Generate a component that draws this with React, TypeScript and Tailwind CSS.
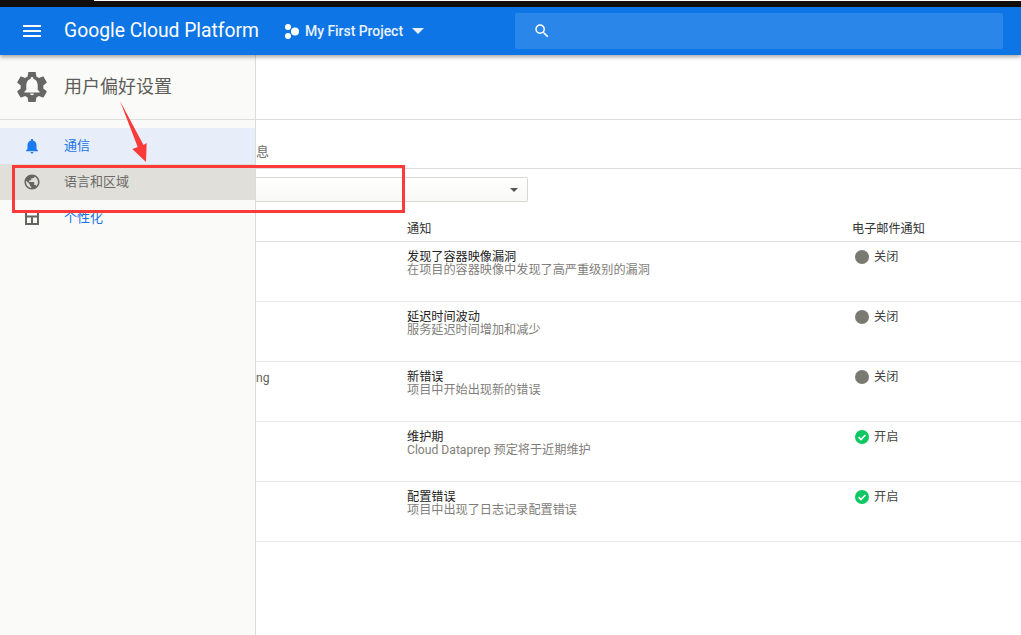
import React from 'react';

const rows = [
  { source: '', title: '发现了容器映像漏洞', desc: '在项目的容器映像中发现了高严重级别的漏洞', on: false },
  { source: '', title: '延迟时间波动', desc: '服务延迟时间增加和减少', on: false },
  { source: 'ng', title: '新错误', desc: '项目中开始出现新的错误', on: false },
  { source: '', title: '维护期', desc: 'Cloud Dataprep 预定将于近期维护', on: true },
  { source: '', title: '配置错误', desc: '项目中出现了日志记录配置错误', on: true },
];

const fontStack = "font-['Roboto','Noto_Sans_CJK_SC',sans-serif]";

const StatusIcon = ({ on }: { on: boolean }) =>
  on ? (
    <svg className="-mt-[1px]" width="14" height="14" viewBox="0 0 14 14">
      <circle cx="7" cy="7" r="7" fill="#0cc762" />
      <path d="M3.6 7.2l2.4 2.4 4.4-4.6" fill="none" stroke="#fff" strokeWidth="1.7" />
    </svg>
  ) : (
    <svg className="-mt-[1px]" width="14" height="14" viewBox="0 0 14 14">
      <circle cx="7" cy="7" r="7" fill="#7b7a72" />
    </svg>
  );

const Header = () => (
  <header className="relative z-20 flex h-[48px] shrink-0 items-center bg-[#0e75e6] shadow-[0_2px_4px_rgba(0,0,0,0.35)]">
    <svg className="ml-[20px]" width="24" height="24" viewBox="0 0 24 24" fill="#fff">
      <path d="M3 18h18v-2H3v2zm0-5h18v-2H3v2zm0-7v2h18V6H3z" />
    </svg>
    <span className="ml-[20px] w-[221px] text-[19.3px] font-normal text-white font-['Roboto',sans-serif]">
      Google Cloud Platform
    </span>
    <svg width="15" height="15" viewBox="0 0 15 15" fill="#fff">
      <circle cx="3" cy="3" r="3" />
      <circle cx="3" cy="12" r="3" />
      <circle cx="10" cy="7.5" r="4" />
    </svg>
    <span className="ml-[5px] text-[14px] font-medium tracking-[-0.05px] text-[#e8f1fd] font-['Roboto',sans-serif]">
      My First Project
    </span>
    <svg className="ml-[9px]" width="12" height="6" viewBox="0 0 12 6" fill="#e8f1fd">
      <path d="M0 0h12L6 6z" />
    </svg>
    <div className="ml-[91px] flex h-[36px] w-[488px] items-center rounded-[2px] bg-[#2a86e9] pl-[18px]">
      <svg width="18" height="18" viewBox="0 0 24 24" fill="#fff">
        <path d="M15.5 14h-.79l-.28-.27A6.47 6.47 0 0 0 16 9.5 6.5 6.5 0 1 0 9.5 16c1.61 0 3.09-.59 4.23-1.57l.27.28v.79l5 4.99L20.49 19l-4.99-5zm-6 0C7.01 14 5 11.99 5 9.5S7.01 5 9.5 5 14 7.01 14 9.5 11.99 14 9.5 14z" />
      </svg>
    </div>
  </header>
);

const Sidebar = () => (
  <aside className="relative z-10 w-[256px] shrink-0 border-r border-[#dcdcd8] bg-[#fafaf8]">
    <div className="flex h-[65px] items-center border-b border-[#dfdfdb] pb-[1px] pl-[17px]">
      <svg width="30" height="30" viewBox="2.5 2.5 19 19">
        <path
          fill="#666662"
          d="M19.14 12.94c.04-.3.06-.61.06-.94 0-.32-.02-.64-.07-.94l2.03-1.58c.18-.14.23-.41.12-.61l-1.92-3.32c-.12-.22-.37-.29-.59-.22l-2.39.96c-.5-.38-1.03-.7-1.62-.94l-.36-2.54c-.04-.24-.24-.41-.48-.41h-3.84c-.24 0-.43.17-.47.41l-.36 2.54c-.59.24-1.13.57-1.62.94l-2.39-.96c-.22-.08-.47 0-.59.22L2.74 8.87c-.12.21-.08.47.12.61l2.03 1.58c-.05.3-.09.63-.09.94s.02.64.07.94l-2.03 1.58c-.18.14-.23.41-.12.61l1.92 3.32c.12.22.37.29.59.22l2.39-.96c.5.38 1.03.7 1.62.94l.36 2.54c.05.24.24.41.48.41h3.84c.24 0 .44-.17.47-.41l.36-2.54c.59-.24 1.13-.56 1.62-.94l2.39.96c.22.08.47 0 .59-.22l1.92-3.32c.12-.22.07-.47-.12-.61l-2.01-1.58z"
        />
        <path
          fill="#fafaf8"
          d="M12 17.2c.7 0 1.2-.5 1.2-1.1h-2.4c0 .6.5 1.1 1.2 1.1zm3.6-3.4v-3c0-1.9-1-3.4-2.7-3.8v-.4c0-.5-.4-.9-.9-.9s-.9.4-.9.9V7c-1.7.4-2.7 1.9-2.7 3.8v3l-1.2 1.2v.5h9.6V15z"
        />
      </svg>
      <span className="ml-[17px] text-[18px] text-[#5e5d59]">用户偏好设置</span>
    </div>
    <nav className="mt-[8px] flex flex-col text-[13px]">
      <div className="flex h-[36px] items-center bg-[#e8eef9] pl-[23px] text-[#1a73e8]">
        <svg width="18" height="18" viewBox="0 0 24 24" fill="#1a7bee">
          <path d="M12 22c1.1 0 2-.9 2-2h-4c0 1.1.9 2 2 2zm6-6v-5c0-3.07-1.63-5.64-4.5-6.32V4c0-.83-.67-1.5-1.5-1.5s-1.5.67-1.5 1.5v.68C7.64 5.36 6 7.92 6 11v5l-2 2v1h16v-1l-2-2z" />
        </svg>
        <span className="ml-[23px]">通信</span>
      </div>
      <div className="flex h-[36px] items-center bg-[#e0dfda] pl-[23px] text-[#6b6a66]">
        <svg width="18" height="18" viewBox="0 0 24 24" fill="#66655f">
          <path d="M12 2C6.48 2 2 6.48 2 12s4.48 10 10 10 10-4.48 10-10S17.52 2 12 2zm-1 17.93c-3.95-.49-7-3.85-7-7.93 0-.62.08-1.21.21-1.79L9 15v1c0 1.1.9 2 2 2v1.93zm6.9-2.54c-.26-.81-1-1.39-1.9-1.39h-1v-3c0-.55-.45-1-1-1H8v-2h2c.55 0 1-.45 1-1V7h2c1.1 0 2-.9 2-2v-.41c2.93 1.19 5 4.06 5 7.41 0 2.08-.8 3.97-2.1 5.39z" />
        </svg>
        <span className="ml-[23px]">语言和区域</span>
      </div>
      <div className="flex h-[36px] items-center pl-[23px] text-[#1a73e8]">
        <svg width="18" height="18" viewBox="0 0 18 18" fill="none" stroke="#66655f" strokeWidth="2">
          <path d="M3 3h12v12H3zM3 7.5h12M9 7.5V15" />
        </svg>
        <span className="ml-[23px]">个性化</span>
      </div>
    </nav>
  </aside>
);

const Main = () => (
  <main className="min-w-0 flex-1 overflow-hidden bg-white text-[12.15px]">
    <div className="h-[65px] border-b border-[#dcdcd8]" />
    <div className="flex h-[49px] items-center border-b border-[#dcdcd8] pt-[16px] text-[13px] text-[#6f6e6a]">
      <span>息</span>
    </div>
    <div className="pt-[8px]">
      <div className="flex h-[25px] w-[272px] items-center justify-end rounded-r-[2px] border border-l-0 border-[#d8d8d4] bg-gradient-to-b from-white to-[#f8f8f6] pr-[9px]">
        <svg width="8" height="4" viewBox="0 0 8 4" fill="#555">
          <path d="M0 0h8L4 4z" />
        </svg>
      </div>
    </div>
    <div className="mt-[15px] grid h-[25px] grid-cols-[151px_445px_1fr] border-b border-[#dcdcd8] pt-[3px] text-[#333]">
      <span />
      <span>通知</span>
      <span>电子邮件通知</span>
    </div>
    {rows.map((row) => (
      <div
        key={row.title}
        className="grid h-[60px] grid-cols-[151px_445px_1fr] border-b border-[#e8e8e6] pt-[9px] leading-[13px]"
      >
        <span className="pt-[1px] text-[#5f5f5b]">{row.source}</span>
        <div>
          <div className="text-[#222]">{row.title}</div>
          <div className="text-[#7f7e7a]">{row.desc}</div>
        </div>
        <div className="flex items-start gap-[5px] pl-[3px]">
          <StatusIcon on={row.on} />
          <span className="text-[#444]">{row.on ? '开启' : '关闭'}</span>
        </div>
      </div>
    ))}
  </main>
);

export default function App() {
  return (
    <div className={`relative flex h-[635px] w-[1021px] flex-col overflow-hidden bg-white ${fontStack}`}>
      <div className="h-[7px] shrink-0 bg-[#110d0b]">
        <div className="ml-[94px] h-[1px] bg-white" />
      </div>
      <Header />
      <div className="flex min-h-0 flex-1">
        <Sidebar />
        <Main />
      </div>
      {/* red annotation drawn over the screenshot */}
      <div className="absolute left-[12px] top-[165px] z-30 h-[48px] w-[393px] border-[3px] border-[#fb3a3a]" />
      <svg className="absolute left-[115px] top-[98px] z-30" width="40" height="70" viewBox="115 98 40 70" fill="#fb3a3a">
        <path d="M120 101L143.5 145L146.7 143L146 162L132.3 149L137.7 147Z" />
      </svg>
    </div>
  );
}
